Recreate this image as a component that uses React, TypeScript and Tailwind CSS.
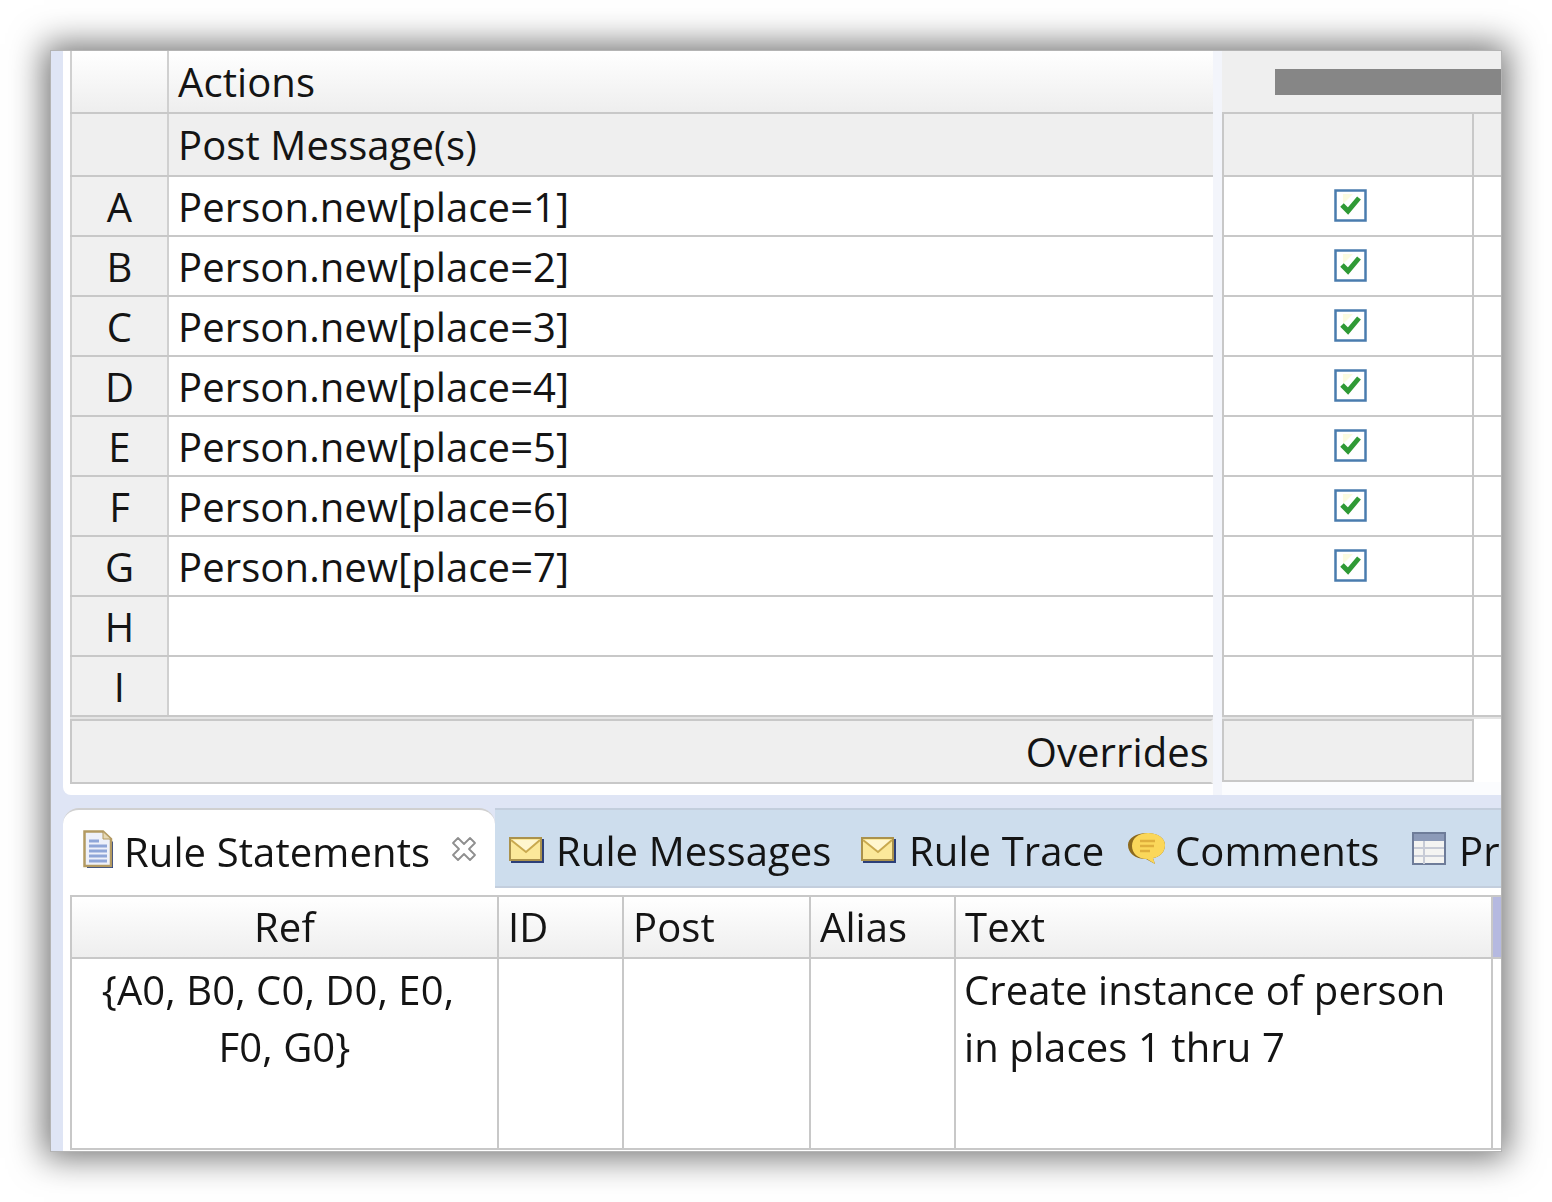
import React from 'react'

const rows = [
  ['A', 'Person.new[place=1]'],
  ['B', 'Person.new[place=2]'],
  ['C', 'Person.new[place=3]'],
  ['D', 'Person.new[place=4]'],
  ['E', 'Person.new[place=5]'],
  ['F', 'Person.new[place=6]'],
  ['G', 'Person.new[place=7]'],
  ['H', ''],
  ['I', ''],
]

const CheckIcon = () => (
  <svg className="mb-[2px] h-[33px] w-[33px]" viewBox="0 0 33 33">
    <rect x="1.5" y="1.5" width="30" height="30" fill="#fff" stroke="#4a7cae" strokeWidth="2.5" />
    <path d="M9 5 L19 5 L9 15 Z" fill="#fbfbe0" />
    <path d="M8 16 L14 22 L25 9" fill="none" stroke="#2f9a35" strokeWidth="5" />
  </svg>
)

const DocIcon = () => (
  <svg className="h-[39px] w-[31px]" viewBox="0 0 31 39">
    <path d="M4 3 H21 L30 12 V38 H4 Z" fill="#24408a" />
    <path d="M1.5 1.5 H20 L28 9 V36 H1.5 Z" fill="#eef1fa" stroke="#b39a62" strokeWidth="2.5" />
    <path d="M20 1.5 V9 H28 Z" fill="#e6d9b5" stroke="#b39a62" strokeWidth="1" />
    <path d="M6 11 H16 M6 16 H24 M6 21 H24 M6 26 H24 M6 31 H24" stroke="#8fa6d8" strokeWidth="3" />
  </svg>
)

const MailIcon = () => (
  <svg className="mt-[4px] h-[26px] w-[35px]" viewBox="0 0 35 26">
    <rect x="2" y="2" width="33" height="24" fill="#2c3f78" />
    <rect x="1" y="1" width="31" height="22" fill="#fbe89a" stroke="#ab924c" strokeWidth="2" />
    <path d="M2 3 L17 15 L31 3" fill="#fff6cf" stroke="#c9a94f" strokeWidth="2" />
  </svg>
)

const BubbleIcon = () => (
  <svg className="mt-[2px] h-[36px] w-[39px]" viewBox="0 0 39 36">
    <path d="M20 2 C31 2 38 7 38 14 C38 21 33 26 26 27 L28 33 L19 28 C8 28 1 22 1 14 C1 7 9 2 20 2 Z" fill="#8d6a1e" />
    <path d="M21 2 C31 2 38 7 38 14 C38 21 33 26 26 27 L28 33 L20 28 C11 28 5 22 5 15 C5 7 12 2 21 2 Z" fill="#fbd75a" />
    <path d="M13 10 H28 M13 15 H27 M13 20 H23" stroke="#dfaf3c" strokeWidth="2.5" />
  </svg>
)

const TableIcon = () => (
  <svg className="h-[33px] w-[34px]" viewBox="0 0 34 33">
    <rect x="1" y="1" width="32" height="31" fill="#f4f4f2" stroke="#6e7c99" strokeWidth="2" />
    <rect x="2" y="2" width="30" height="7" fill="#8c9ab8" />
    <path d="M2 16 H32 M2 24 H32 M12 9 V32" stroke="#c7cbd6" strokeWidth="2" />
  </svg>
)

const CloseIcon = () => (
  <svg className="h-[26px] w-[26px]" viewBox="0 0 26 26">
    <path
      d="M2 7 L7 2 L13 8 L19 2 L24 7 L18 13 L24 19 L19 24 L13 18 L7 24 L2 19 L8 13 Z"
      fill="#fff"
      stroke="#8f8f8f"
      strokeWidth="1.8"
      strokeLinejoin="round"
    />
  </svg>
)

const Tab = ({ icon, label, className }: { icon: React.ReactNode; label: string; className: string }) => (
  <div className={`flex shrink-0 items-center ${className}`}>
    {icon}
    <span className="mt-[6px] whitespace-nowrap">{label}</span>
  </div>
)

export default function App() {
  return (
    <div className="min-h-[1202px] bg-white pt-[50px] pl-[50px] font-['Open_Sans',sans-serif] text-[40px] tracking-[0.1px] text-[#141414]">
      <div className="flex h-[1102px] w-[1452px] flex-col overflow-hidden border border-[#b4b4b4] bg-[#dfe5f5] pl-[12px] shadow-[0_0_32px_6px_rgba(0,0,0,0.55)] blur-[0.6px]">
        <div className="flex h-[744px] shrink-0 rounded-bl-lg bg-white pl-[7px]">
          <div className="flex w-[1143px] shrink-0 flex-col">
            <div className="flex h-[63px] shrink-0 border-b-2 border-[#c8c8c8] bg-gradient-to-b from-white to-[#eeeeee]">
              <div className="w-[99px] shrink-0 border-x-2 border-[#d0d0d0]" />
              <div className="flex flex-1 items-center pl-[9px]">Actions</div>
            </div>
            <div className="flex h-[63px] shrink-0 border-b-2 border-[#c8c8c8] bg-[#efefef]">
              <div className="w-[99px] shrink-0 border-x-2 border-[#d0d0d0]" />
              <div className="flex flex-1 items-center pl-[9px]">Post Message(s)</div>
            </div>
            {rows.map(([letter, text]) => (
              <div key={letter} className="flex h-[60px] shrink-0 border-b-2 border-[#c8c8c8]">
                <div className="flex w-[99px] shrink-0 items-center justify-center border-x-2 border-[#d0d0d0] bg-[#f0f0f0] pt-[2px]">
                  {letter}
                </div>
                <div className="flex flex-1 items-center pt-[2px] pl-[9px]">{text}</div>
              </div>
            ))}
            <div className="h-[2px] shrink-0 bg-[#e4e4e4]" />
            <div className="flex h-[65px] shrink-0 items-center justify-end border-x-2 border-y-2 border-[#c8c8c8] border-r-transparent bg-[#efefef] pr-[2px]">
              Overrides
            </div>
          </div>
          <div className="w-[9px] shrink-0 bg-[#f3f5fb]" />
          <div className="flex flex-1 flex-col bg-[#fbfcfe]">
            <div className="flex h-[63px] shrink-0 items-center border-b-2 border-[#c8c8c8] bg-[#efefef] pl-[53px]">
              <div className="h-[26px] flex-1 bg-[#868686]" />
            </div>
            <div className="flex h-[63px] shrink-0 border-b-2 border-[#c8c8c8] bg-[#efefef]">
              <div className="w-[252px] shrink-0 border-x-2 border-[#c8c8c8]" />
            </div>
            {rows.map(([letter, text]) => (
              <div key={letter} className="flex h-[60px] shrink-0 border-b-2 border-[#c8c8c8] bg-white">
                <div className="flex w-[252px] shrink-0 items-center justify-center border-x-2 border-[#c8c8c8] pl-[5px]">
                  {text && <CheckIcon />}
                </div>
              </div>
            ))}
            <div className="h-[2px] shrink-0 bg-[#e4e4e4]" />
            <div className="flex h-[63px] shrink-0 bg-white">
              <div className="w-[252px] shrink-0 border-2 border-[#c8c8c8] bg-[#efefef]" />
            </div>
          </div>
        </div>

        <div className="mt-[13px] flex h-[344px] shrink-0 flex-col overflow-hidden bg-white">
          <div className="flex h-[80px] shrink-0 bg-[#dfe5f5]">
            <div className="flex w-[432px] shrink-0 items-center rounded-t-2xl border-t-2 border-[#d0d0d0] bg-white pl-[20px]">
              <Tab icon={<DocIcon />} label="Rule Statements" className="gap-[10px]" />
              <div className="ml-[21px]">
                <CloseIcon />
              </div>
            </div>
            <div className="flex flex-1 items-center border-y-2 border-[#c3cedd] bg-[#cddded] pl-[14px]">
              <Tab icon={<MailIcon />} label="Rule Messages" className="w-[352px] gap-[12px]" />
              <Tab icon={<MailIcon />} label="Rule Trace" className="w-[266px] gap-[13px]" />
              <Tab icon={<BubbleIcon />} label="Comments" className="w-[285px] gap-[9px]" />
              <Tab icon={<TableIcon />} label="Properties" className="gap-[13px]" />
            </div>
          </div>
          <div className="mt-[7px] ml-[7px] flex flex-1 flex-col">
            <div className="flex h-[64px] shrink-0 border-y-2 border-[#c8c8c8] bg-gradient-to-b from-white to-[#eeeeee]">
              <div className="flex w-[429px] shrink-0 items-center justify-center border-x-2 border-[#c8c8c8]">Ref</div>
              <div className="flex w-[125px] shrink-0 items-center border-r-2 border-[#c8c8c8] pl-[9px]">ID</div>
              <div className="flex w-[187px] shrink-0 items-center border-r-2 border-[#c8c8c8] pl-[9px]">Post</div>
              <div className="flex w-[145px] shrink-0 items-center border-r-2 border-[#c8c8c8] pl-[9px]">Alias</div>
              <div className="flex w-[537px] shrink-0 items-center border-r-2 border-[#c8c8c8] pl-[9px]">Text</div>
              <div className="flex-1 bg-[#b5b9e0]" />
            </div>
            <div className="flex h-[191px] shrink-0 border-b-2 border-[#c8c8c8] leading-[57px]">
              <div className="w-[429px] shrink-0 border-x-2 border-[#c8c8c8] pt-[2px] text-center">
                <div className="pr-[13px]">{'{A0, B0, C0, D0, E0,'}</div>
                <div>{'F0, G0}'}</div>
              </div>
              <div className="w-[125px] shrink-0 border-r-2 border-[#c8c8c8]" />
              <div className="w-[187px] shrink-0 border-r-2 border-[#c8c8c8]" />
              <div className="w-[145px] shrink-0 border-r-2 border-[#c8c8c8]" />
              <div className="w-[537px] shrink-0 border-r-2 border-[#c8c8c8] pt-[2px] pl-[8px]">
                <div>Create instance of person</div>
                <div>in places 1 thru 7</div>
              </div>
            </div>
          </div>
        </div>
      </div>
    </div>
  )
}
